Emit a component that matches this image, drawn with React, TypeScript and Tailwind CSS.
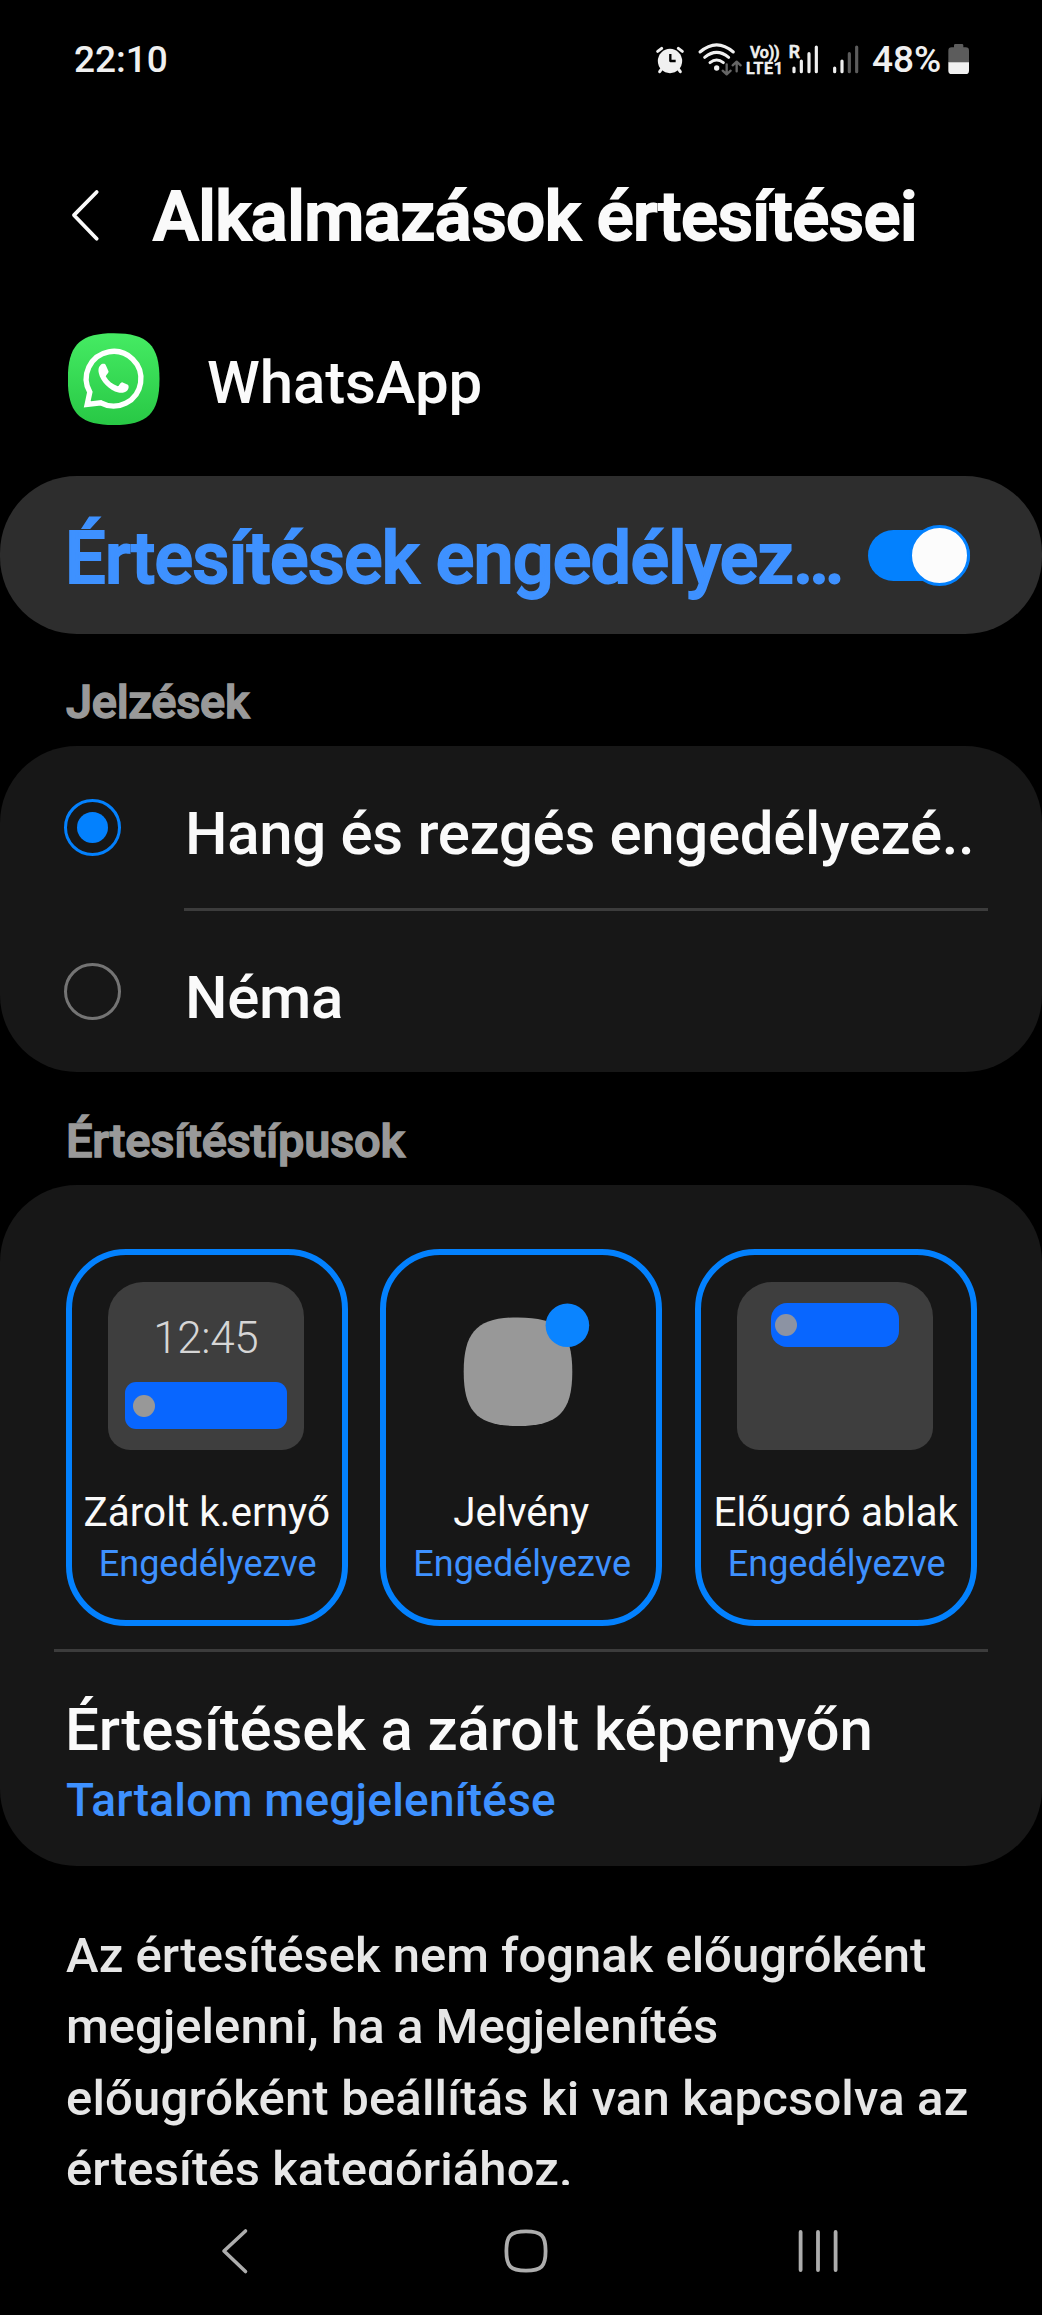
import type { ReactNode } from "react";

const SQUIRCLE = "M0 50C0 13 13 0 50 0S100 13 100 50S87 100 50 100S0 87 0 50Z";

function StatusBar() {
  return (
    <header className="flex h-[120px] shrink-0 items-center pl-[74px] pr-[72px] text-[37px] font-medium text-[#f0f0f0]">
      <span>22:10</span>
      <svg className="ml-auto h-[60px] w-[216px]" viewBox="30 0 648 180" fill="none" strokeLinecap="round" strokeLinejoin="round">
        <g stroke="#f0f0f0" strokeWidth="9">
          <circle cx="90" cy="93" r="36.5" fill="#f0f0f0" stroke="none" />
          <path d="M53 64L65 55M127 64L115 55M64 118L59 125M116 118L121 125" />
          <path d="M91 72V93H107" stroke="#000" strokeWidth="7" strokeLinecap="butt" />
          <path d="M180 66Q230 23 280 66M194 82Q230 52 266 82M210 98Q230 82 250 98" />
        </g>
        <circle cx="230" cy="114" r="8" fill="#f0f0f0" />
        <path d="M260 103V132M248 122L260 133L272 122M290 124V96M278 106L290 95L302 106" stroke="#666" strokeWidth="7" />
        <g fill="#f0f0f0" stroke="#f0f0f0" strokeWidth="2" fontFamily="Roboto" fontWeight="500">
          <text x="330" y="84" fontSize="48" textLength="89">Vo))</text>
          <text x="318" y="132" fontSize="48" textLength="111">LTE1</text>
          <text x="446" y="84" fontSize="53">R</text>
        </g>
        <g stroke="#f0f0f0" strokeWidth="9.5">
          <path d="M462 114V125M484 93V125M507 71V125M529 51V125M584 114V125M606 93V125" />
          <path d="M628 71V125M650 51V125" stroke="#5c5c5c" />
        </g>
      </svg>
      <span className="ml-[6px] w-[70px]">48%</span>
      <svg className="ml-[6px] h-[60px] w-[22px]" viewBox="924 0 66 180">
        <path d="M925 98V62Q925 52 935 52H942V46Q942 42 946 42H966Q970 42 970 46V52H977Q987 52 987 62V98Z" fill="#5c5c5c" />
        <path d="M925 97H987V122Q987 132 977 132H935Q925 132 925 122Z" fill="#f0f0f0" />
      </svg>
    </header>
  );
}

function AppIcon() {
  return (
    <svg className="h-[92px] w-[92px]" viewBox="86.5 519.5 276 276">
      <defs>
        <linearGradient id="wa" x1="0" y1="0" x2="0" y2="1">
          <stop offset="0" stopColor="#45eb63" />
          <stop offset="1" stopColor="#28c845" />
        </linearGradient>
      </defs>
      <path d={SQUIRCLE} transform="translate(86 520.5) scale(2.75)" fill="url(#wa)" />
      <path d="M144 734L152 697A82 82 0 1 1 185 729Z" fill="none" stroke="#fff" strokeWidth="16" strokeLinejoin="miter" />
      <path
        d="M190 612C195 611 198 612 200 616L208 634C210 639 199 646 200 650C208 664 220 674 236 679C240 679 243 667 249 667L266 675C270 678 269 686 265 691C258 698 248 700 238 698C210 691 184 664 179 640C176 627 180 616 190 612Z"
        fill="#fff"
      />
    </svg>
  );
}

function SectionTitle({ children, className }: { children: ReactNode; className: string }) {
  return (
    <h2 className={`flex shrink-0 items-center pl-[66px] text-[47px] font-medium text-[#999] [-webkit-text-stroke:1.5px_#999] ${className}`}>
      {children}
    </h2>
  );
}

function RadioRow({ label, checked, className }: { label: string; checked?: boolean; className: string }) {
  return (
    <div className={`flex items-center gap-[64px] pl-[64px] ${className}`}>
      <span
        className={
          checked
            ? "flex size-[57px] shrink-0 items-center justify-center rounded-full border-[3px] border-[#0381fe]"
            : "size-[57px] shrink-0 rounded-full border-[3px] border-[#747474]"
        }
      >
        {checked && <span className="size-[31px] rounded-full bg-[#0381fe]" />}
      </span>
      <span className="mt-[13px] whitespace-nowrap text-[60px] font-medium leading-[70px] tracking-[-0.34px]">{label}</span>
    </div>
  );
}

function TypeCard({ label, children }: { label: string; children: ReactNode }) {
  return (
    <div className="flex h-[377px] w-[282px] flex-col items-center rounded-[60px] border-[6px] border-[#0381fe] pt-[27px]">
      {children}
      <span className="mt-[36px] whitespace-nowrap text-[40.5px] leading-[52px]">{label}</span>
      <span className="pl-[2px] text-[36px] leading-[52px] text-[#3e91ff]">Engedélyezve</span>
    </div>
  );
}

const SCREEN = "mr-[2px] flex h-[168px] w-[196px] flex-col items-center rounded-t-[35px] rounded-b-[22px] bg-[#3e3e3e]";

export default function App() {
  return (
    <div className="flex h-[2315px] w-[1042px] flex-col overflow-hidden bg-black font-[Roboto,sans-serif] text-[#fafafa]">
      <StatusBar />

      <div className="flex h-[194px] shrink-0 items-center pl-[70px]">
        <svg className="-mt-[3px] h-[56px] w-[32px]" viewBox="0 0 32 56" fill="none" stroke="#fafafa" strokeWidth="3.8" strokeLinecap="round" strokeLinejoin="round">
          <path d="M26.7 4L4 27.2L26.7 50.7" />
        </svg>
        <h1 className="ml-[51px] whitespace-nowrap text-[69px] font-medium tracking-[-0.57px] [-webkit-text-stroke:2px_#fafafa]">
          Alkalmazások értesítései
        </h1>
      </div>

      <div className="flex h-[130px] shrink-0 items-center pl-[68px]">
        <AppIcon />
        <span className="ml-[47px] mt-[8px] text-[60px] font-medium leading-[70px] tracking-[-0.12px]">WhatsApp</span>
      </div>

      <section className="mt-[32px] flex h-[158px] shrink-0 items-center justify-between rounded-[77px] bg-[#2d2d2d] pl-[65px] pr-[72px]">
        <span className="mt-[7px] whitespace-nowrap text-[72px] font-medium leading-[90px] tracking-[-0.77px] text-[#3e91ff] [-webkit-text-stroke:2px_#3e91ff]">
          Értesítések engedélyez…
        </span>
        <span className="flex h-[51px] w-[102px] items-center justify-end rounded-full bg-[#0381fe]">
          <span className="size-[61px] shrink-0 rounded-full border-[3px] border-[#0381fe] bg-[#fcfcfc]" />
        </span>
      </section>

      <SectionTitle className="h-[112px] pt-[25px] tracking-[-0.3px]">Jelzések</SectionTitle>

      <section className="h-[326px] shrink-0 rounded-[77px] bg-[#171717]">
        <RadioRow className="h-[162px]" label="Hang és rezgés engedélyezé.." checked />
        <div className="ml-[184px] mr-[54px] h-[3px] bg-[#3c3c3c]" />
        <RadioRow className="h-[161px]" label="Néma" />
      </section>

      <SectionTitle className="h-[113px] pt-[26px] tracking-[-0.23px]">Értesítéstípusok</SectionTitle>

      <section className="h-[681px] shrink-0 rounded-[77px] bg-[#171717] pt-[64px]">
        <div className="flex gap-[32.5px] pl-[65.75px]">
          <TypeCard label="Zárolt k.ernyő">
            <div className={`${SCREEN} pt-[30px]`}>
              <span className="text-[44px] font-light leading-[52px] tracking-[-0.36px] text-[#d6d6d6]">12:45</span>
              <div className="mt-[18px] flex h-[47px] w-[162px] items-center rounded-[11px] bg-[#0866ff] pl-[8px]">
                <span className="size-[22px] rounded-full bg-[#989898]" />
              </div>
            </div>
          </TypeCard>
          <TypeCard label="Jelvény">
            <svg className="h-[168px] w-[196px]" viewBox="0 0 196 168">
              <path d={SQUIRCLE} transform="translate(40.7 35.4) scale(1.086)" fill="#989898" />
              <circle cx="144.4" cy="43.3" r="21.8" fill="#0a84ff" />
            </svg>
          </TypeCard>
          <TypeCard label="Előugró ablak">
            <div className={`${SCREEN} pt-[21px]`}>
              <div className="flex h-[44px] w-[128px] items-center rounded-[16px] bg-[#0866ff] pl-[4px]">
                <span className="size-[22px] rounded-full bg-[#8c93a3]" />
              </div>
            </div>
          </TypeCard>
        </div>
        <div className="mx-[54px] mt-[23px] h-[3px] bg-[#3c3c3c]" />
        <div className="mt-[43px] pl-[65px] text-[60px] font-medium leading-[70px] tracking-[-0.1px]">
          Értesítések a zárolt képernyőn
        </div>
        <div className="mt-[5px] pl-[66px] text-[46px] font-medium leading-[60px] tracking-[0.18px] text-[#3e91ff]">
          Tartalom megjelenítése
        </div>
      </section>

      <div className="h-[319px] shrink-0 overflow-hidden pl-[66px] pt-[54px]">
        <p className="whitespace-nowrap text-[49px] font-medium leading-[71.3px] text-[#e6e6e6]">
          <span className="block">Az értesítések nem fognak előugróként</span>
          <span className="block tracking-[0.06px]">megjelenni, ha a Megjelenítés</span>
          <span className="block tracking-[0.17px]">előugróként beállítás ki van kapcsolva az</span>
          <span className="block tracking-[0.09px]">értesítés kategóriához.</span>
        </p>
      </div>

      <nav className="flex h-[130px] shrink-0 items-center pl-[220px] pt-[2px]">
        <svg className="h-[48px] w-[30px]" viewBox="0 0 30 48" fill="none" stroke="#adadad" strokeWidth="3.6" strokeLinecap="round" strokeLinejoin="round">
          <path d="M25.5 4L4 24L25.5 44.5" />
        </svg>
        <svg className="ml-[253px] h-[46px] w-[46px]" viewBox="0 0 46 46" fill="none" stroke="#adadad" strokeWidth="3.8">
          <path d="M3.4 23C3.4 7.5 7.5 3.4 23 3.4S42.6 7.5 42.6 23S38.5 42.6 23 42.6S3.4 38.5 3.4 23Z" />
        </svg>
        <svg className="ml-[248px] h-[46px] w-[44px]" viewBox="0 0 44 46" stroke="#adadad" strokeWidth="3.8" strokeLinecap="round">
          <path d="M3.6 4V42M21 4V42M38.6 4V42" />
        </svg>
      </nav>
    </div>
  );
}
